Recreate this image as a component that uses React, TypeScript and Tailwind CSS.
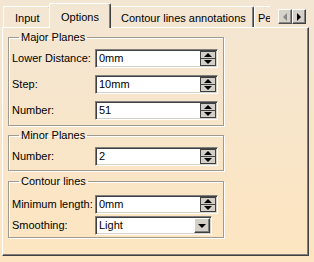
import React from "react";

const font = "font-['Tahoma','Liberation_Sans',sans-serif] text-[11px] text-black";

const UpArrow = () => (
  <div className="w-0 h-0 border-x-[4px] border-x-transparent border-b-[4px] border-b-black" />
);
const DownArrow = () => (
  <div className="w-0 h-0 border-x-[4px] border-x-transparent border-t-[4px] border-t-black" />
);

const Raised = ({ children, className = "" }: { children: React.ReactNode; className?: string }) => (
  <div
    className={`flex items-center justify-center bg-[#d4d0c8] border border-t-white border-l-white border-r-[#404040] border-b-[#404040] shadow-[inset_-1px_-1px_0_#808080] ${className}`}
  >
    {children}
  </div>
);

const Field = ({ value, kind = "spin", width = "w-[123px]" }: { value: string; kind?: "spin" | "combo"; width?: string }) => (
  <div
    className={`${width} h-[19px] flex bg-white border border-t-[#808080] border-l-[#808080] border-r-white border-b-white shadow-[inset_1px_1px_0_#404040,inset_-1px_-1px_0_#d4d0c8] p-[2px] pl-[3px]`}
  >
    <span className="flex-1 leading-[13px]">{value}</span>
    {kind === "spin" ? (
      <div className="flex flex-col w-[16px] bg-[#404040] gap-px p-px -my-px -mr-px">
        <Raised className="flex-1 border-0 shadow-none">
          <UpArrow />
        </Raised>
        <Raised className="flex-1 border-0 shadow-none">
          <DownArrow />
        </Raised>
      </div>
    ) : (
      <Raised className="w-[16px] -my-px -mr-px">
        <DownArrow />
      </Raised>
    )}
  </div>
);

const Row = ({ label, children }: { label: string; children: React.ReactNode }) => (
  <div className="flex items-center h-[19px]">
    <span className="w-[83px]">{label}</span>
    {children}
  </div>
);

const Group = ({ title, children, className = "" }: { title: string; children: React.ReactNode; className?: string }) => (
  <fieldset
    className={`w-[216px] border border-[#a09a90] shadow-[inset_1px_1px_0_#fff,1px_1px_0_#fff] px-[3px] ${className}`}
  >
    <legend className="ml-[7px] px-[2px] leading-[13px]">{title}</legend>
    {children}
  </fieldset>
);

const Tab = ({ label, active = false, className = "" }: { label: string; active?: boolean; className?: string }) => (
  <div
    className={`flex items-start border-l border-t border-white border-r border-r-[#404040] rounded-t-[2px] shadow-[inset_-1px_0_0_#808080] ${
      active ? "h-[25px] pt-[5px] z-10 -mb-px bg-[#f3e6d2] -mx-[2px]" : "h-[21px] pt-[3px]"
    } ${className}`}
  >
    {label}
  </div>
);

export default function App() {
  return (
    <div className={`w-[314px] h-[262px] overflow-hidden bg-gradient-to-b from-[#f3e6d3] to-[#fde5c0] ${font}`}>
      <div className="flex items-end h-[27px] pl-[3px] pr-[6px]">
        <Tab label="Input" className="w-[48px] pl-[11px]" />
        <Tab label="Options" active className="w-[62px] pl-[11px]" />
        <Tab label="Contour lines annotations" className="w-[145px] pl-[11px]" />
        <div className="w-[16px] h-[21px] pt-[3px] pl-[3px] border-l border-t border-white overflow-hidden whitespace-nowrap">
          Pe
        </div>
        <div className="flex self-start mt-[9px] ml-[8px]">
          <Raised className="w-[14px] h-[15px] opacity-90">
            <div className="w-0 h-0 border-y-[4px] border-y-transparent border-r-[4px] border-r-[#808080]" />
          </Raised>
          <Raised className="w-[14px] h-[15px]">
            <div className="w-0 h-0 border-y-[4px] border-y-transparent border-l-[4px] border-l-black" />
          </Raised>
        </div>
      </div>
      <div className="ml-[2px] w-[307px] h-[229px] border border-t-white border-l-white border-r-[#404040] border-b-[#404040] shadow-[inset_-1px_-1px_0_#808080] pl-[5px] pt-[3px] flex flex-col">
        <Group title="Major Planes" className="h-[95px] pt-[5px]">
          <div className="flex flex-col gap-[7px]">
            <Row label="Lower Distance:">
              <Field value="0mm" />
            </Row>
            <Row label="Step:">
              <Field value="10mm" />
            </Row>
            <Row label="Number:">
              <Field value="51" />
            </Row>
          </div>
        </Group>
        <Group title="Minor Planes" className="h-[42px] mt-[3px] pt-[5px]">
          <Row label="Number:">
            <Field value="2" />
          </Row>
        </Group>
        <Group title="Contour lines" className="h-[63px] mt-[4px] pt-[7px]">
          <div className="flex flex-col gap-[2px]">
            <Row label="Minimum length:">
              <Field value="0mm" />
            </Row>
            <Row label="Smoothing:">
              <Field value="Light" kind="combo" width="w-[117px]" />
            </Row>
          </div>
        </Group>
      </div>
    </div>
  );
}
